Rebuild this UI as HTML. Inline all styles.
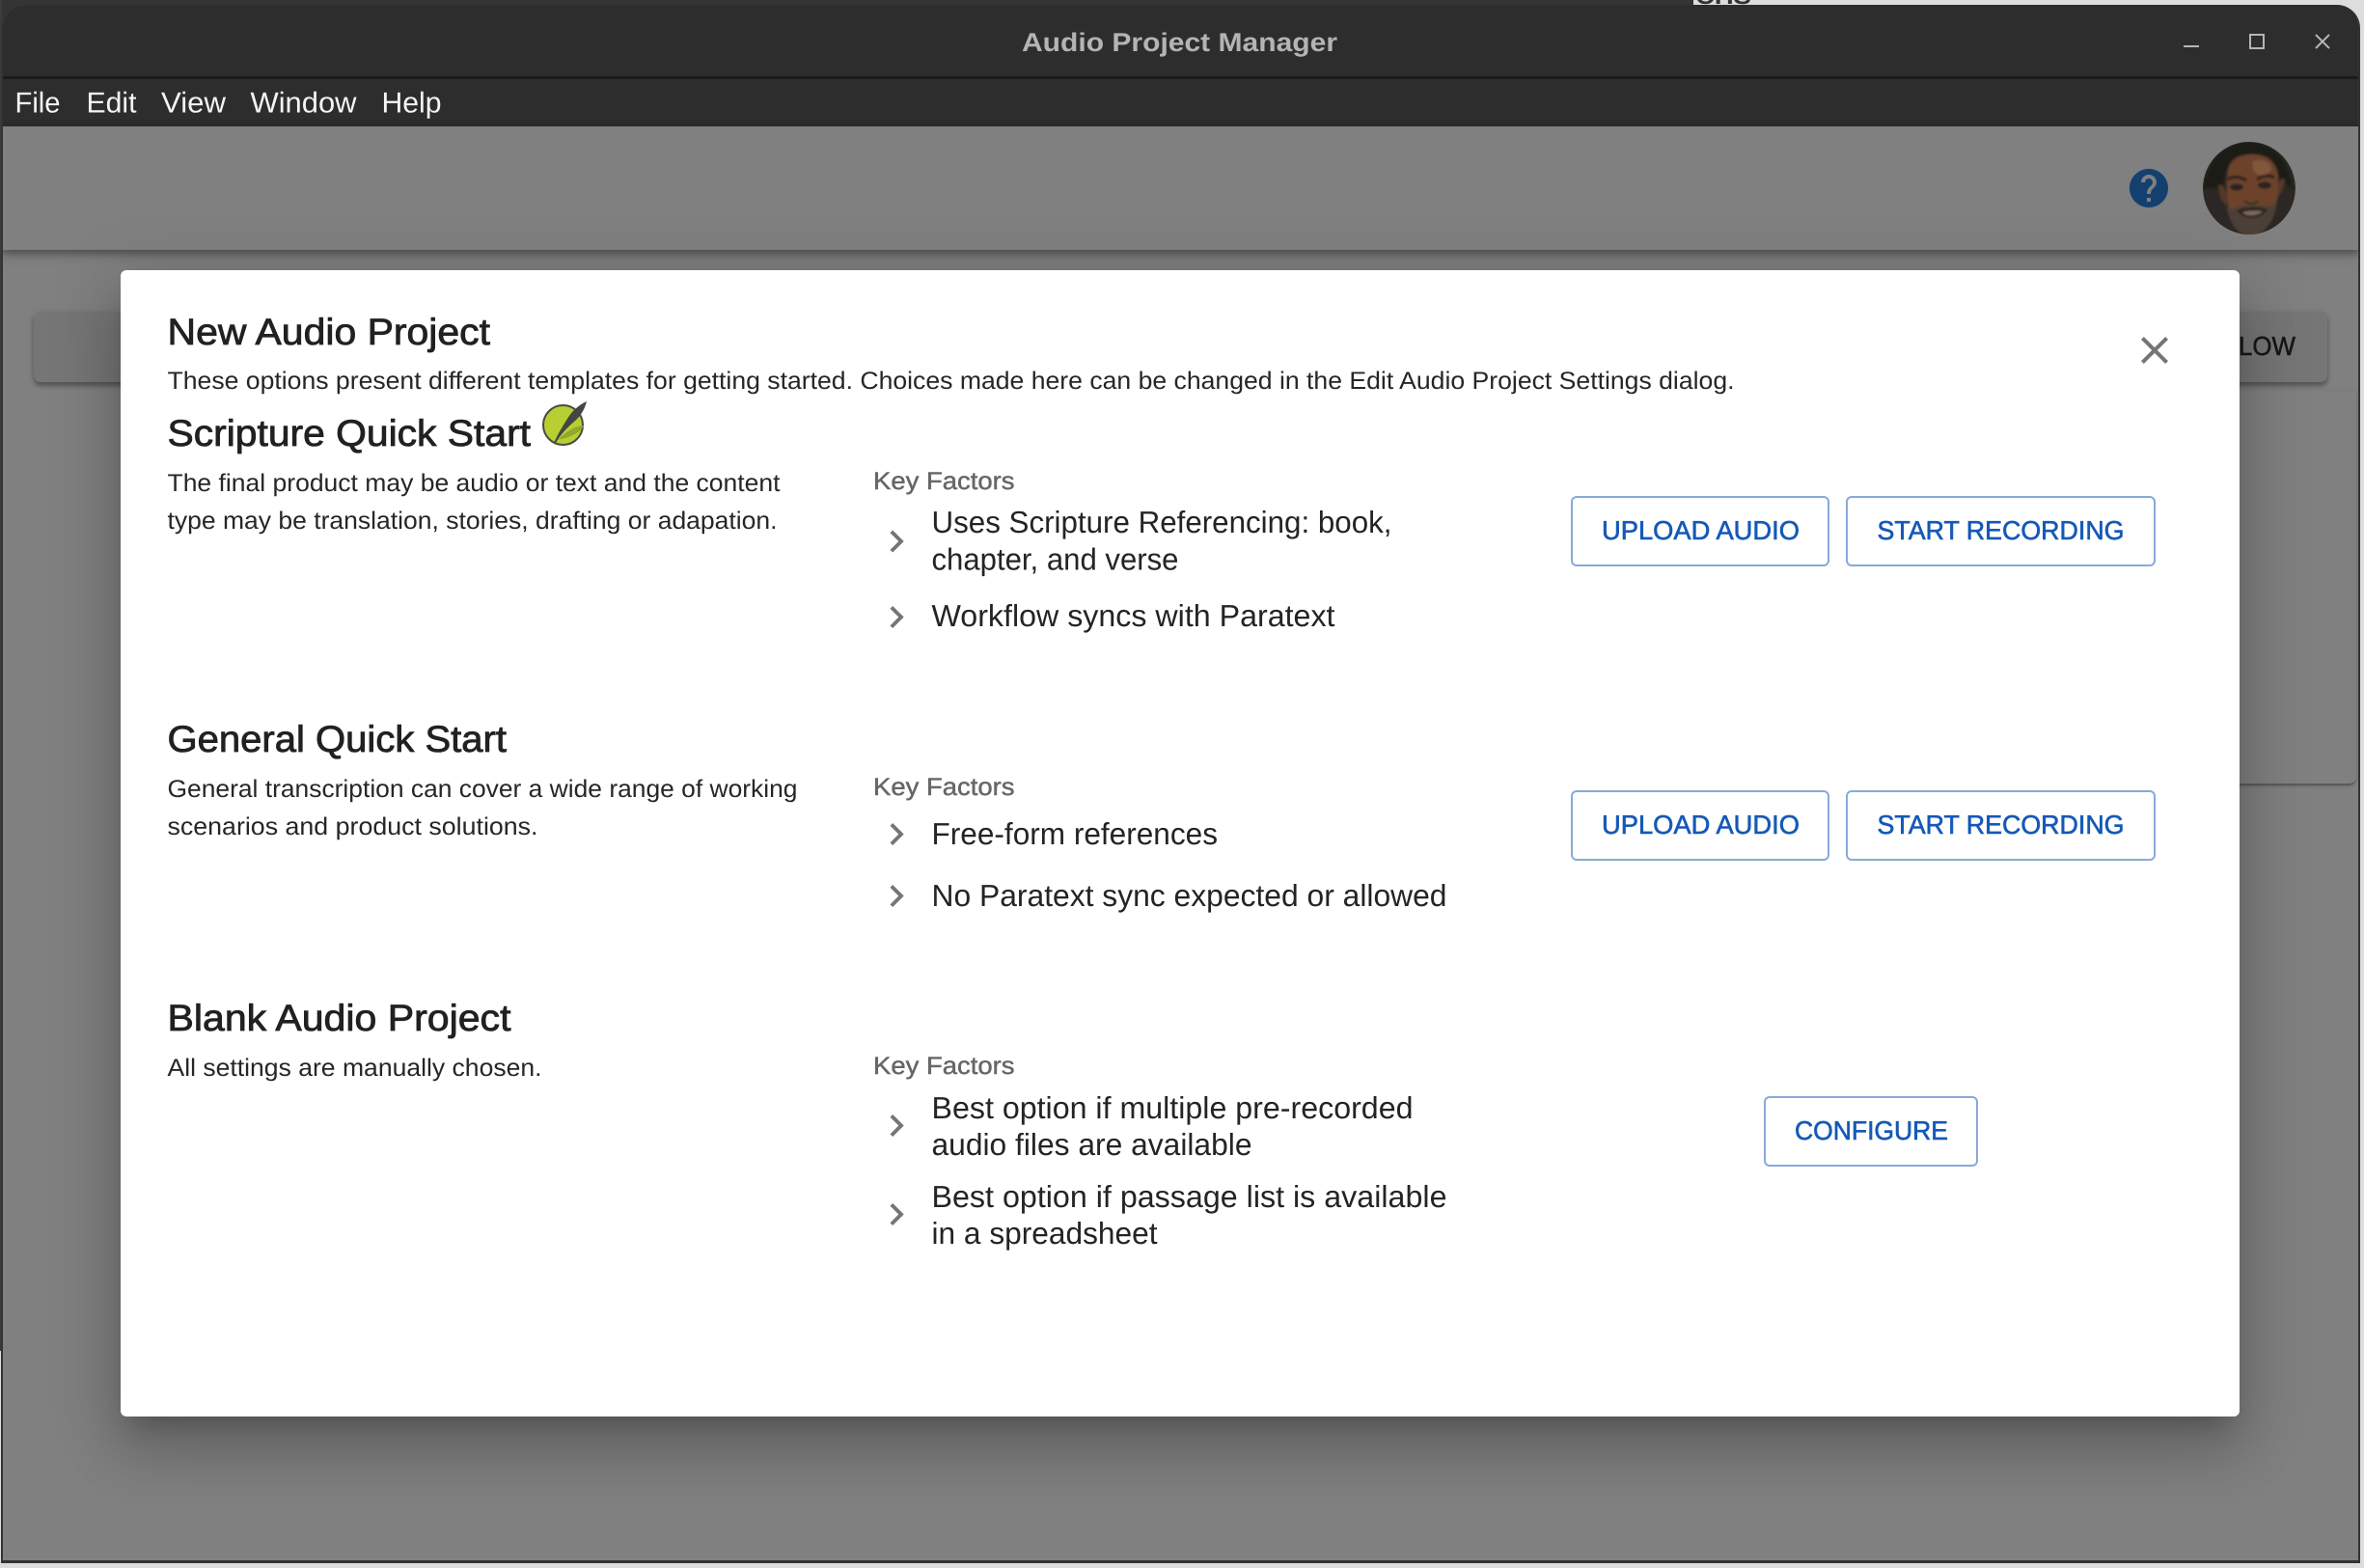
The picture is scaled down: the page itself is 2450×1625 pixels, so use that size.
<!DOCTYPE html>
<html lang="en"><head><meta charset="utf-8"><title>Audio Project Manager</title>
<style>
html,body{margin:0;padding:0;width:2450px;height:1625px;overflow:hidden;background:#dcdddc}
div{position:absolute;box-sizing:border-box}
svg{position:absolute;left:0;top:0}
text{font-family:"Liberation Sans",sans-serif;text-rendering:geometricPrecision}
.h{font-size:38.5px;fill:#212121;stroke:#212121;stroke-width:.8px}
.p{font-size:25.5px;fill:#262626}
.k{font-size:25.5px;fill:#666;stroke:#666;stroke-width:.45px}
.l{font-size:31.8px;fill:#242424}
.b{font-size:27.4px;fill:#1559b7;stroke:#1559b7;stroke-width:.6px}
.m{font-size:30px;fill:#f4f4f4}
.ch{fill:#757575}
.btn{border:2px solid #88a9dc;border-radius:6px;background:#fff}
</style></head><body>
<div style="left:0;top:0;width:1755px;height:6px;background:#343434"></div>
<div style="left:0;top:0;width:30px;height:30px;background:#343434"></div>
<div style="left:0;top:0;width:2px;height:1400px;background:#3c3c3c"></div>
<svg width="2450" height="6" style="z-index:1"><text x="1757" y="4" font-size="24" font-weight="700" fill="#333" textLength="58" lengthAdjust="spacingAndGlyphs">CHS</text></svg>

<div style="left:1px;top:5px;width:2445px;height:1615px;background:#333;border-radius:24px 24px 0 0;z-index:2;overflow:hidden;">
  <div style="left:2px;top:0;width:2441px;height:1612px;background:#808080;border-radius:22px 22px 0 0;overflow:hidden">
    <div style="left:0;top:0;width:100%;height:75px;background:#2d2d2d"></div>
    <div style="left:0;top:74px;width:100%;height:3px;background:#1b1b1b"></div>
    <div style="left:0;top:77px;width:100%;height:49px;background:#2d2d2d"></div>
    <div style="left:0;top:126px;width:100%;height:128px;background:#808080;box-shadow:0 3px 7px 1px rgba(0,0,0,.3),0 6px 14px rgba(0,0,0,.12)"></div>
    <div style="left:2000px;top:400px;width:439px;height:409px;border-radius:0 0 8px 8px;border-bottom:2px solid #5b5b5b;box-shadow:0 1px 3px rgba(0,0,0,.18)"></div>
    <div style="left:32px;top:318px;width:2377px;height:73px;border-radius:7px;background:#767676;box-shadow:0 4px 5px rgba(0,0,0,.3),0 1px 8px rgba(0,0,0,.1)"></div>
  </div>
</div>

<div style="left:125px;top:280px;width:2196px;height:1188px;background:#fff;border-radius:6px;z-index:3;box-shadow:0 17px 23px -11px rgba(0,0,0,.2),0 37px 59px 5px rgba(0,0,0,.14),0 14px 72px 12px rgba(0,0,0,.12)"></div>

<div class="btn" style="left:1628px;top:514px;width:268px;height:73px;z-index:4"></div>
<div class="btn" style="left:1913px;top:514px;width:321px;height:73px;z-index:4"></div>
<div class="btn" style="left:1628px;top:819px;width:268px;height:73px;z-index:4"></div>
<div class="btn" style="left:1913px;top:819px;width:321px;height:73px;z-index:4"></div>
<div class="btn" style="left:1828px;top:1136px;width:222px;height:73px;z-index:4"></div>

<svg width="2450" height="1625" viewBox="0 0 2450 1625" style="z-index:5">
  <defs>
    <clipPath id="av"><circle cx="2331" cy="195" r="48"/></clipPath>
    <filter id="soft" x="-10%" y="-10%" width="120%" height="120%"><feGaussianBlur stdDeviation="1.1"/></filter>
  </defs>
  <!-- title bar -->
  <text x="1059" y="53" font-size="27" font-weight="700" fill="#b4b4b4" textLength="327" lengthAdjust="spacingAndGlyphs">Audio Project Manager</text>
  <rect x="2263" y="47" width="16" height="2" fill="#b5b5b5"/>
  <rect x="2332" y="36" width="14" height="14" fill="none" stroke="#b5b5b5" stroke-width="2"/>
  <path d="M2400 36 2414 50M2414 36 2400 50" stroke="#b5b5b5" stroke-width="2" fill="none"/>
  <!-- menu -->
  <text class="m" x="15.5" y="116.5" textLength="47" lengthAdjust="spacingAndGlyphs">File</text>
  <text class="m" x="89.5" y="116.5" textLength="52" lengthAdjust="spacingAndGlyphs">Edit</text>
  <text class="m" x="167" y="116.5" textLength="67" lengthAdjust="spacingAndGlyphs">View</text>
  <text class="m" x="259.5" y="116.5" textLength="110" lengthAdjust="spacingAndGlyphs">Window</text>
  <text class="m" x="395.5" y="116.5" textLength="62" lengthAdjust="spacingAndGlyphs">Help</text>
  <!-- help -->
  <g transform="translate(2203 171) scale(2)"><path fill="#13406f" d="M12 2C6.48 2 2 6.48 2 12s4.48 10 10 10 10-4.48 10-10S17.52 2 12 2zm1 17h-2v-2h2v2zm2.07-7.75-.9.92C13.45 12.9 13 13.5 13 15h-2v-.5c0-1.1.45-2.1 1.17-2.83l1.24-1.26c.37-.36.59-.86.59-1.41 0-1.1-.9-2-2-2s-2 .9-2 2H8c0-2.21 1.79-4 4-4s4 1.79 4 4c0 .88-.36 1.68-.93 2.25z"/></g>
  <!-- avatar -->
  <g clip-path="url(#av)"><circle cx="2331" cy="195" r="48" fill="#2b2724"/>
  <g filter="url(#soft)">
    <path d="M2283 195C2290 160 2310 147 2331 147C2355 147 2372 165 2376 195L2362 185C2360 170 2345 160 2325 160C2312 162 2306 175 2304 195Z" fill="#1b1a18"/>
    <path d="M2299 192C2304 190 2307 196 2308 205L2308 212C2303 212 2300 204 2299 192Z" fill="#54392a"/>
    <path d="M2368 186C2364 183 2361 188 2360 197L2359 204C2364 203 2367 196 2368 186Z" fill="#54392a"/>
    <path d="M2309 176C2312 164 2322 160 2335 160C2350 160 2359 168 2361 182C2362 200 2360 220 2352 232C2345 241 2325 243 2316 234C2308 222 2306 195 2309 176Z" fill="#6c432b"/>
    <path d="M2334 168C2342 164 2352 166 2354 175C2352 182 2342 184 2336 178Z" fill="#82583c"/>
    <path d="M2307 212C2312 222 2318 212 2333 212C2348 212 2354 218 2360 208C2358 225 2350 241 2335 245C2318 245 2310 230 2307 212Z" fill="#4c4139"/>
    <path d="M2309 186C2314 182 2322 183 2328 187M2339 186C2345 182 2352 181 2357 184" stroke="#2a211c" stroke-width="3" fill="none"/>
    <ellipse cx="2318" cy="194" rx="7" ry="3.5" fill="#2b2420"/>
    <ellipse cx="2347" cy="192" rx="7" ry="3.5" fill="#2b2420"/>
    <path d="M2326 208C2330 212 2336 212 2341 208" stroke="#49301f" stroke-width="2.5" fill="none"/>
    <path d="M2318 218C2326 214 2342 214 2350 217C2344 228 2326 229 2318 218Z" fill="#2f241e"/>
    <path d="M2324 220C2330 218 2340 218 2345 219C2340 224 2328 225 2324 220Z" fill="#7d6b5e"/>
  </g></g>
  <text x="2320" y="368" font-size="27.5" fill="#141414" stroke="#141414" stroke-width=".5" textLength="59" lengthAdjust="spacingAndGlyphs">LOW</text>

  <!-- dialog head -->
  <text class="h" x="173.5" y="357" textLength="334.5" lengthAdjust="spacingAndGlyphs">New Audio Project</text>
  <text class="p" x="173.5" y="403" textLength="1624" lengthAdjust="spacingAndGlyphs">These options present different templates for getting started. Choices made here can be changed in the Edit Audio Project Settings dialog.</text>
  <g transform="translate(2209 339) scale(2)"><path fill="#757575" d="M19 6.41 17.59 5 12 10.59 6.41 5 5 6.41 10.59 12 5 17.59 6.41 19 12 13.41 17.59 19 19 17.59 13.41 12z"/></g>

  <!-- Scripture -->
  <text class="h" x="173.5" y="462" textLength="376.5" lengthAdjust="spacingAndGlyphs">Scripture Quick Start</text>
  <ellipse cx="583.5" cy="440.5" rx="20.5" ry="20.5" fill="#b7cf30" stroke="#4a4a48" stroke-width="2"/>
  <path d="M578 456C586 448 596 441 605 441C602 448 592 453 578 456Z" fill="#8fa92c"/>
  <path d="M608 416C601 419 594 425 590 431C584 440 578 450 574 459L576 459C581 450 588 443 595 437C602 431 606 424 608 416Z" fill="#454545"/>
  <text class="p" x="173.5" y="509" textLength="635" lengthAdjust="spacingAndGlyphs">The final product may be audio or text and the content</text>
  <text class="p" x="173.5" y="548" textLength="632" lengthAdjust="spacingAndGlyphs">type may be translation, stories, drafting or adapation.</text>
  <text class="k" x="905" y="507" textLength="146.5" lengthAdjust="spacingAndGlyphs">Key Factors</text>
  <path class="ch" transform="translate(906 538) scale(1.92)" d="M10 6 8.59 7.41 13.17 12l-4.58 4.59L10 18l6-6z"/>
  <text class="l" x="965.5" y="552" textLength="477" lengthAdjust="spacingAndGlyphs">Uses Scripture Referencing: book,</text>
  <text class="l" x="965.5" y="590.5" textLength="256" lengthAdjust="spacingAndGlyphs">chapter, and verse</text>
  <path class="ch" transform="translate(906 616.5) scale(1.92)" d="M10 6 8.59 7.41 13.17 12l-4.58 4.59L10 18l6-6z"/>
  <text class="l" x="965.5" y="649" textLength="418" lengthAdjust="spacingAndGlyphs">Workflow syncs with Paratext</text>
  <text class="b" x="1660" y="559" textLength="205" lengthAdjust="spacingAndGlyphs">UPLOAD AUDIO</text>
  <text class="b" x="1945.5" y="559" textLength="256" lengthAdjust="spacingAndGlyphs">START RECORDING</text>

  <!-- General -->
  <text class="h" x="173.5" y="779" textLength="351.5" lengthAdjust="spacingAndGlyphs">General Quick Start</text>
  <text class="p" x="173.5" y="826" textLength="653" lengthAdjust="spacingAndGlyphs">General transcription can cover a wide range of working</text>
  <text class="p" x="173.5" y="865" textLength="384" lengthAdjust="spacingAndGlyphs">scenarios and product solutions.</text>
  <text class="k" x="905" y="824" textLength="146.5" lengthAdjust="spacingAndGlyphs">Key Factors</text>
  <path class="ch" transform="translate(906 841.5) scale(1.92)" d="M10 6 8.59 7.41 13.17 12l-4.58 4.59L10 18l6-6z"/>
  <text class="l" x="965.5" y="875" textLength="296.5" lengthAdjust="spacingAndGlyphs">Free-form references</text>
  <path class="ch" transform="translate(906 905.5) scale(1.92)" d="M10 6 8.59 7.41 13.17 12l-4.58 4.59L10 18l6-6z"/>
  <text class="l" x="965.5" y="939" textLength="534" lengthAdjust="spacingAndGlyphs">No Paratext sync expected or allowed</text>
  <text class="b" x="1660" y="864" textLength="205" lengthAdjust="spacingAndGlyphs">UPLOAD AUDIO</text>
  <text class="b" x="1945.5" y="864" textLength="256" lengthAdjust="spacingAndGlyphs">START RECORDING</text>

  <!-- Blank -->
  <text class="h" x="173.5" y="1068" textLength="356" lengthAdjust="spacingAndGlyphs">Blank Audio Project</text>
  <text class="p" x="173.5" y="1115" textLength="388" lengthAdjust="spacingAndGlyphs">All settings are manually chosen.</text>
  <text class="k" x="905" y="1113" textLength="146.5" lengthAdjust="spacingAndGlyphs">Key Factors</text>
  <path class="ch" transform="translate(906 1143.5) scale(1.92)" d="M10 6 8.59 7.41 13.17 12l-4.58 4.59L10 18l6-6z"/>
  <text class="l" x="965.5" y="1159" textLength="499" lengthAdjust="spacingAndGlyphs">Best option if multiple pre-recorded</text>
  <text class="l" x="965.5" y="1197" textLength="332" lengthAdjust="spacingAndGlyphs">audio files are available</text>
  <path class="ch" transform="translate(906 1235.5) scale(1.92)" d="M10 6 8.59 7.41 13.17 12l-4.58 4.59L10 18l6-6z"/>
  <text class="l" x="965.5" y="1251" textLength="534" lengthAdjust="spacingAndGlyphs">Best option if passage list is available</text>
  <text class="l" x="965.5" y="1289" textLength="234" lengthAdjust="spacingAndGlyphs">in a spreadsheet</text>
  <text class="b" x="1860" y="1181" textLength="159" lengthAdjust="spacingAndGlyphs">CONFIGURE</text>
</svg>
</body></html>
